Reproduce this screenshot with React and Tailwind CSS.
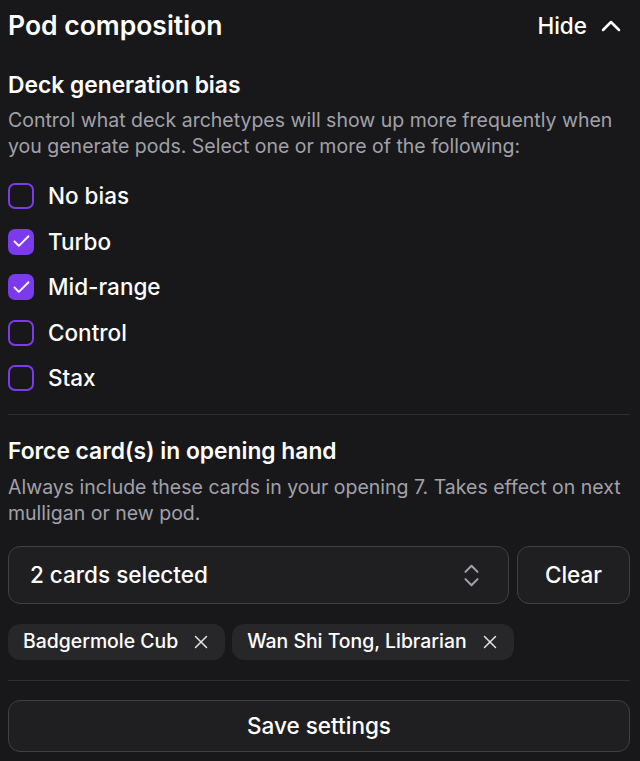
import React from "react";

const options = [
  { label: "No bias", checked: false },
  { label: "Turbo", checked: true },
  { label: "Mid-range", checked: true },
  { label: "Control", checked: false },
  { label: "Stax", checked: false },
];

function Box({ checked }) {
  if (checked) {
    return (
      <span className="flex h-[26px] w-[26px] shrink-0 items-center justify-center rounded-[7px] bg-[#7c3aed]">
        <svg width="21" height="21" viewBox="0 0 24 24" fill="none" stroke="white" strokeWidth="2.1" strokeLinecap="round" strokeLinejoin="round">
          <path d="M20 6 9 17l-5-5" />
        </svg>
      </span>
    );
  }
  return <span className="h-[26px] w-[26px] shrink-0 rounded-[7px] border-2 border-[#7c3aed]" />;
}

export default function App() {
  return (
    <div className="min-h-[761px] bg-[#18181b] pl-2 pr-[10px] text-white" style={{ fontFamily: "Inter, 'Noto Sans', sans-serif" }}>
      <div className="flex h-[52px] items-center justify-between">
        <h1 className="text-[26.5px] font-semibold">Pod composition</h1>
        <button className="mr-[3px] flex items-center gap-[8px] text-[22.5px] font-medium">
          Hide
          <svg width="32" height="32" viewBox="0 0 24 24" fill="none" stroke="white" strokeWidth="1.9" strokeLinecap="round" strokeLinejoin="round">
            <path d="m18 15-6-6-6 6" />
          </svg>
        </button>
      </div>

      <div className="pt-[18px]">
        <h2 className="text-[22.8px] font-semibold leading-[30px]">Deck generation bias</h2>
        <p className="mt-[7px] text-[19.5px] leading-[26px] text-[#a1a1aa]">
          Control what deck archetypes will show up more frequently when you generate pods. Select one or more of the following:
        </p>
        <div className="mt-[24px] flex flex-col gap-[19.5px]">
          {options.map((o) => (
            <label key={o.label} className="flex h-[26px] items-center gap-[14px]">
              <Box checked={o.checked} />
              <span className="text-[22.5px] font-medium">{o.label}</span>
            </label>
          ))}
        </div>
      </div>

      <div className="mt-[23px] h-px bg-[#2e2e33]" />

      <div className="pt-[21px]">
        <h2 className="text-[22.8px] font-semibold leading-[30px]">Force card(s) in opening hand</h2>
        <p className="mt-[8px] text-[19.5px] leading-[26px] text-[#a1a1aa]">
          Always include these cards in your opening 7. Takes effect on next mulligan or new pod.
        </p>
        <div className="mt-[20px] flex gap-[8px]">
          <button className="flex h-[58px] flex-1 items-center justify-between rounded-[12px] border border-[#3f3f46] bg-[#1f1f22] pl-[21px] pr-[22px] text-[22.5px] font-medium">
            2 cards selected
            <svg width="29" height="29" viewBox="0 0 24 24" fill="none" stroke="#a1a1aa" strokeWidth="1.7" strokeLinecap="round" strokeLinejoin="round">
              <path d="m7 15 5 5 5-5" />
              <path d="m7 9 5-5 5 5" />
            </svg>
          </button>
          <button className="h-[58px] w-[113px] rounded-[12px] border border-[#3f3f46] bg-[#1f1f22] text-[22.5px] font-medium">
            Clear
          </button>
        </div>
        <div className="mt-[20px] flex gap-[7px]">
          {["Badgermole Cub", "Wan Shi Tong, Librarian"].map((c) => (
            <span key={c} className="flex h-[36px] items-center gap-[12px] rounded-[12px] bg-[#27272a] pl-[15px] pr-[13px] text-[19.4px] font-medium">
              {c}
              <svg width="22" height="22" viewBox="0 0 24 24" fill="none" stroke="#e4e4e7" strokeWidth="1.6" strokeLinecap="round">
                <path d="M18 6 6 18" />
                <path d="m6 6 12 12" />
              </svg>
            </span>
          ))}
        </div>
      </div>

      <div className="mt-[20px] h-px bg-[#2e2e33]" />

      <button className="mt-[19px] h-[52px] w-full rounded-[12px] border border-[#3f3f46] bg-[#1f1f22] text-[22.5px] font-medium">
        Save settings
      </button>
    </div>
  );
}
